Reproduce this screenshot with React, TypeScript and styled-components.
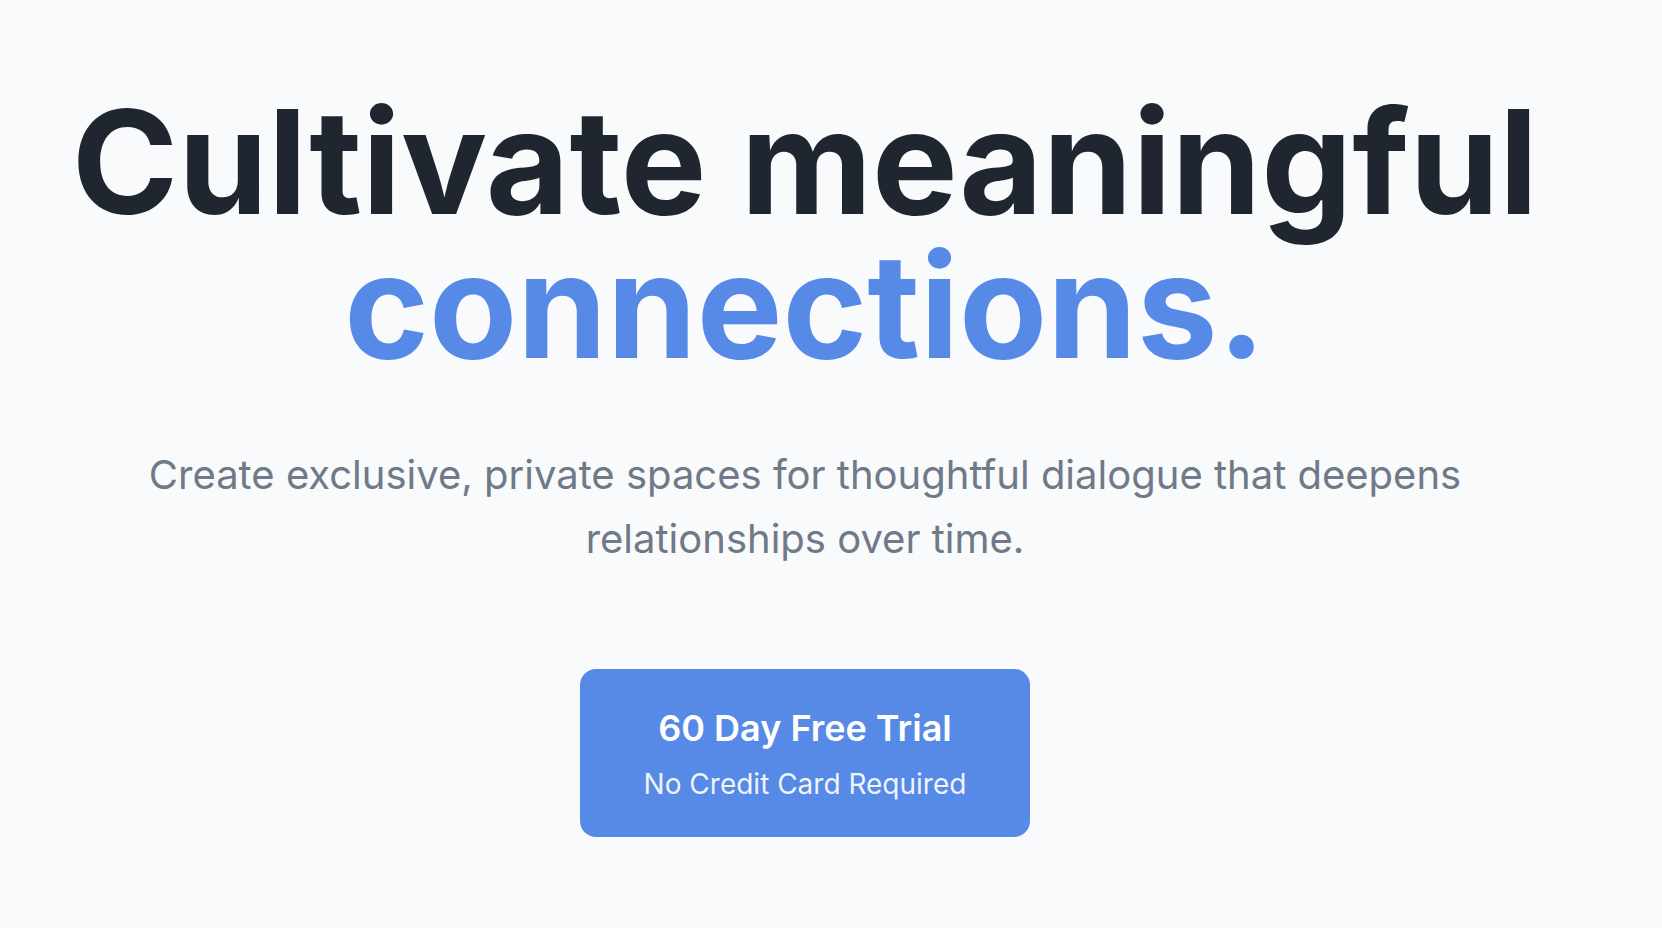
import React from "react";
import styled, { createGlobalStyle } from "styled-components";

const GlobalStyle = createGlobalStyle`
  html, body {
    margin: 0;
    padding: 0;
    background: #f8fafc;
  }
  body {
    font-family: Inter, "Noto Sans", sans-serif;
    -webkit-font-smoothing: antialiased;
  }
`;

const Page = styled.main`
  min-height: 928px;
  max-width: 1610px;
  display: flex;
  flex-direction: column;
  align-items: center;
  padding-top: 90px;
  box-sizing: border-box;
`;

const Heading = styled.h1`
  margin: 0;
  font-size: 144px;
  line-height: 1;
  font-weight: 700;
  letter-spacing: 0;
  color: #1f2630;
  text-align: center;
`;

const Accent = styled.span`
  display: block;
  color: #568ae6;
`;

const Lead = styled.p`
  margin: 65px 0 0;
  max-width: 1340px;
  font-size: 40px;
  line-height: 1.6;
  font-weight: 400;
  color: #6f7987;
  text-align: center;
`;

const TrialButton = styled.button`
  margin-top: 98px;
  width: 450px;
  height: 168px;
  box-sizing: border-box;
  padding: 38px 0 0;
  border: none;
  border-radius: 16px;
  background: #568ae6;
  color: #ffffff;
  font-family: inherit;
  display: flex;
  flex-direction: column;
  align-items: center;
  justify-content: flex-start;
  gap: 16px;
  cursor: pointer;
`;

const ButtonTitle = styled.span`
  font-size: 36px;
  line-height: 1.2;
  font-weight: 600;
`;

const ButtonNote = styled.span`
  font-size: 28px;
  line-height: 1.3;
  font-weight: 400;
  color: rgba(255, 255, 255, 0.92);
`;

export default function App() {
  return (
    <>
      <GlobalStyle />
      <Page>
        <Heading>
          Cultivate meaningful
          <Accent>connections.</Accent>
        </Heading>
        <Lead>
          Create exclusive, private spaces for thoughtful dialogue that deepens
          relationships over time.
        </Lead>
        <TrialButton>
          <ButtonTitle>60 Day Free Trial</ButtonTitle>
          <ButtonNote>No Credit Card Required</ButtonNote>
        </TrialButton>
      </Page>
    </>
  );
}
